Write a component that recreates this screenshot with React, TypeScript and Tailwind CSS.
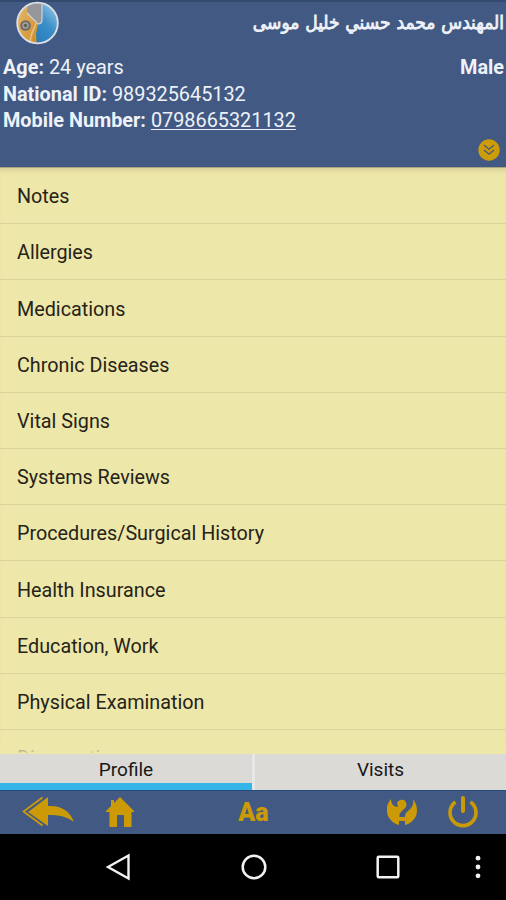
import React, { FC } from 'react';

const menuItems = [
  'Notes',
  'Allergies',
  'Medications',
  'Chronic Diseases',
  'Vital Signs',
  'Systems Reviews',
  'Procedures/Surgical History',
  'Health Insurance',
  'Education, Work',
  'Physical Examination',
  'Diagnostics',
];

const AppLogo: FC = () => (
  <svg className="block w-[44px] h-[46px] ml-[15px]" viewBox="0 0 44 46">
    <defs>
      <linearGradient id="logoBlue" x1="0" y1="1" x2="1" y2="0">
        <stop offset="0" stopColor="#176eaf" />
        <stop offset="0.6" stopColor="#3b8fc9" />
        <stop offset="1" stopColor="#a5d0eb" />
      </linearGradient>
      <linearGradient id="logoGold" x1="0" y1="0" x2="1" y2="1">
        <stop offset="0" stopColor="#e9bf77" />
        <stop offset="1" stopColor="#d08a22" />
      </linearGradient>
      <clipPath id="logoClip">
        <circle cx="22.5" cy="23" r="20" />
      </clipPath>
    </defs>
    <circle cx="22.5" cy="23" r="20" fill="url(#logoBlue)" />
    <g clipPath="url(#logoClip)">
      <path d="M0 0H15L17 18L23 24L21 34L22 46H0Z" fill="url(#logoGold)" />
      <path d="M13 1H27V20C27 24 23 25 21 22L12 13Z" fill="#96979b" />
      <path d="M12 13L21 22C23 25 27 24 27 20V2" fill="none" stroke="#d4d3d2" strokeWidth="1.2" />
      <path d="M21 23C20 29 15 32 15 43" fill="none" stroke="#e7c286" strokeWidth="1.5" />
    </g>
    <circle cx="10.5" cy="25.5" r="5.3" fill="#6d6b69" />
    <circle cx="10.5" cy="25.5" r="3.2" fill="#aaa49c" />
    <circle cx="10.5" cy="25.5" r="1.8" fill="#62615e" />
    <circle cx="22.5" cy="23" r="20.3" fill="none" stroke="#dde1e7" strokeWidth="1.8" />
  </svg>
);

const ExpandIcon: FC = () => (
  <svg className="block size-[22px]" viewBox="0 0 22 22">
    <circle cx="11" cy="11" r="10.7" fill="#cc9c0b" />
    <path d="M6 6L11 10.2L16 6M6 11L11 15.2L16 11" fill="none" stroke="#4d5b6d" strokeWidth="1.4" />
  </svg>
);

const Toolbar: FC = () => (
  <div className="h-[44px] bg-[#425a83] border-t border-[#294b7b] flex items-center text-[#cc9a06]">
    <button type="button" className="ml-[22px]" aria-label="Back">
      <svg className="block w-[53px] h-[32px]" viewBox="0 0 53 32">
        <path d="M6 16L26 1V10C39 9 48 15 52 26C44 20 37 19 26 19V30Z" fill="currentColor" />
        <path d="M20.5 1.5L1.5 15.5L20.5 29.5" fill="none" stroke="currentColor" strokeWidth="1.8" />
      </svg>
    </button>
    <button type="button" className="ml-[30px]" aria-label="Home">
      <svg className="block w-[30px] h-[32px]" viewBox="0 0 30 32" fill="currentColor">
        <path d="M15 1L29 15V16H26.5V31H19V19H12V31H4.5V16H1V15L6 10V4H9V7Z" />
      </svg>
    </button>
    <button type="button" className="ml-[102px] w-[33px] font-black text-[25px] leading-none text-center">
      Aa
    </button>
    <button type="button" className="ml-[117px]" aria-label="Help">
      <svg className="block w-[30px] h-[28px]" viewBox="0 0 30 28" fill="currentColor">
        <path d="M4 1C-1 7-1 13 1 18C3 22 7 26 12 27V23H18V27C23 26 27 22 29 18C31 13 30 6 26 1C27 6 25 10 22 12C20 14 18 15 18 19H12.500C12 15 15 13 17 11C20 9 20 6 18.500 3.500C17 1 12 1 10 5L11 9C7 9 4 6 4 1Z" />
      </svg>
    </button>
    <button type="button" className="ml-[30px]" aria-label="Power">
      <svg className="block size-[32px]" viewBox="0 0 32 32" fill="none" stroke="currentColor" strokeWidth="3.6">
        <path d="M8.5 6A13 13 0 1 0 23.5 6" />
        <path d="M16 2V15" strokeLinecap="round" strokeWidth="4" />
      </svg>
    </button>
  </div>
);

const NavigationBar: FC = () => (
  <div className="h-[67px] bg-black flex items-center">
    <svg className="block w-[26px] h-[30px] ml-[105px]" viewBox="0 0 26 30">
      <path d="M3 15L23.5 3.5V26.5Z" fill="none" stroke="#f2f2f2" strokeWidth="2.4" />
    </svg>
    <svg className="block size-[28px] ml-[109px]" viewBox="0 0 28 28">
      <circle cx="14" cy="14" r="11.3" fill="none" stroke="#f2f2f2" strokeWidth="2.5" />
    </svg>
    <svg className="block size-[24px] ml-[108px]" viewBox="0 0 24 24">
      <rect x="1.7" y="1.7" width="20.6" height="20.6" rx="1" fill="none" stroke="#f2f2f2" strokeWidth="2.5" />
    </svg>
    <svg className="block w-[6px] h-[24px] ml-[75px]" viewBox="0 0 6 24" fill="#f2f2f2">
      <circle cx="3" cy="3.2" r="2.4" />
      <circle cx="3" cy="12" r="2.4" />
      <circle cx="3" cy="20.8" r="2.4" />
    </svg>
  </div>
);

export default function App() {
  return (
    <div className="w-[506px] h-[900px] flex flex-col overflow-hidden font-['Roboto',sans-serif] bg-[#425a83]">
      <header className="h-[167px] shrink-0 border-t-2 border-[#344b70] text-[#eef2f8]">
        <div className="h-[53px] flex justify-between">
          <div className="-mt-[2px]">
            <AppLogo />
          </div>
          <div
            dir="rtl"
            className="pt-[7px] pr-[2px] font-['DejaVu_Sans_Condensed','DejaVu_Sans',sans-serif] text-[19px] leading-[26px] whitespace-nowrap [word-spacing:0.4px] [-webkit-text-stroke:0.8px_#eef2f8]"
          >
            المهندس محمد حسني خليل موسى
          </div>
        </div>
        <div className="pl-[3px] pr-[2px] text-[19.85px] leading-[26.6px]">
          <div className="flex justify-between">
            <p>
              <b>Age:</b> 24 years
            </p>
            <b>Male</b>
          </div>
          <p>
            <b>National ID:</b> 989325645132
          </p>
          <p>
            <b>Mobile Number:</b> <span className="underline decoration-1 underline-offset-2">0798665321132</span>
          </p>
        </div>
        <div className="flex justify-end pr-[6px] pt-[4px]">
          <ExpandIcon />
        </div>
      </header>

      <main className="relative h-[587px] shrink-0 overflow-hidden bg-[#eee7aa] border-t border-[#aaa77e] shadow-[inset_0_5px_5px_-3px_#d3cd95] text-[19.75px] text-[#252318]">
        {menuItems.map((item) => (
          <div key={item} className="h-[56.2px] pl-[17px] pt-[3px] flex items-center border-b border-[#dad39c]">
            {item}
          </div>
        ))}
        {/* fading edge under the scrolled list */}
        <div className="absolute inset-x-0 bottom-0 h-[14px] bg-linear-to-b from-[#eee7aa]/0 to-[#eee7aa]" />
      </main>

      <div className="h-[36px] shrink-0 flex bg-[#dcdad6] text-[19px] leading-[32px] text-center text-[#171717]">
        <div className="w-[252px] border-b-[7px] border-[#33b5e9]">Profile</div>
        <div className="w-[3px] bg-[#e7e8e5]" />
        <div className="flex-1">Visits</div>
      </div>
      <Toolbar />
      <NavigationBar />
    </div>
  );
}
